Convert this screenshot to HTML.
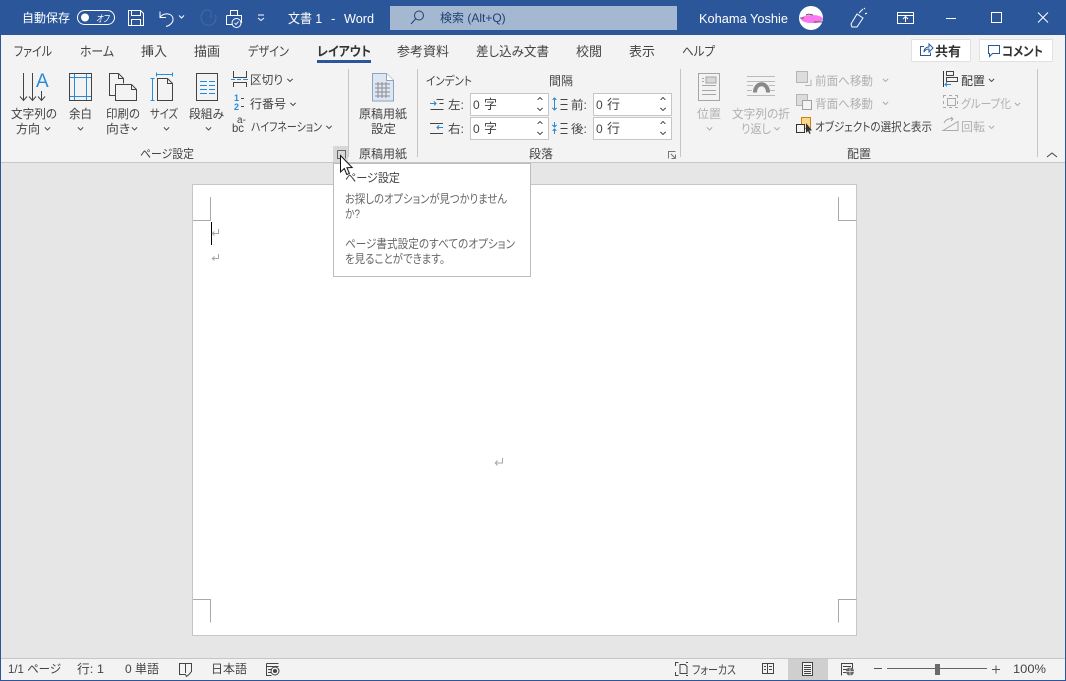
<!DOCTYPE html>
<html><head><meta charset="utf-8"><style>
html,body{margin:0;padding:0;width:1066px;height:681px;overflow:hidden;background:#f3f3f3}
svg{display:block;position:absolute;left:0;top:0}
text{font-family:"Liberation Sans","Noto Sans CJK JP",sans-serif;font-size:12px;fill:#444;font-feature-settings:"palt"}
.w text,text.w{fill:#fff}
.d text,text.d{fill:#b0b0b0}
.t text{font-size:13px}
.ic{fill:none;stroke:#444;stroke-width:1}
.bl{fill:none;stroke:#2b8ad6;stroke-width:1}
.wt{fill:none;stroke:#fff;stroke-width:1}
.ch{fill:none;stroke:#555;stroke-width:1}
.chd{fill:none;stroke:#b0b0b0;stroke-width:1}
.sep{stroke:#c6c6c6;stroke-width:1}
.tip text{fill:#666}
</style></head><body>
<svg width="1066" height="681" viewBox="0 0 1066 681" xmlns="http://www.w3.org/2000/svg" shape-rendering="crispEdges">
<!-- backgrounds -->
<rect width="1066" height="681" fill="#2b579a"/>
<rect x="1" y="35" width="1064" height="127" fill="#f3f3f3"/>
<rect x="1" y="162" width="1064" height="1" fill="#c6c6c6"/>
<rect x="1" y="163" width="1064" height="495" fill="#e6e6e6"/>
<rect x="1" y="658" width="1064" height="1" fill="#c6c6c6"/>
<rect x="1" y="659" width="1064" height="21" fill="#f3f3f3"/>

<!-- Title bar -->
<g class="w">
<text x="22" y="22" textLength="48" lengthAdjust="spacingAndGlyphs">自動保存</text>
<text x="288" y="23" textLength="34" lengthAdjust="spacingAndGlyphs" style="font-size:13px">文書 1</text>
<text x="331" y="23" style="font-size:13px">-</text>
<text x="344" y="23" textLength="30" lengthAdjust="spacingAndGlyphs" style="font-size:13px">Word</text>
<text x="699" y="23" textLength="89" lengthAdjust="spacingAndGlyphs" style="font-size:12.500px">Kohama Yoshie</text>
</g>
<g shape-rendering="geometricPrecision">
<rect x="77.500" y="10.500" width="37" height="14" rx="7" class="wt"/>
<circle cx="85" cy="17.500" r="4" fill="#fff"/>
<text x="96" y="22" class="w" textLength="13" lengthAdjust="spacingAndGlyphs" style="font-size:10px;font-style:italic">オフ</text>
<path d="M128.500 10.500h12l3 3v12h-15zM131.500 10.500v5h9v-5M131.500 25.500v-6h9v6" class="wt"/>
<path d="M160 11.500v6h6M160 17.500c3-5 12-5 13 1 .5 4-3 7-7 8" class="wt"/>
<path d="M179 15.500l2.500 2.500 2.500-2.500" class="wt"/>
<path d="M211 11c-1.500-1-4-1.500-6-.5-4 2-5 7-3 11 2.500 4 8 5 11.500 2 2.500-2 3-5.500 2-8.500" fill="none" stroke="#47699f" stroke-width="1"/>
<path d="M211 11v6h-.5" fill="none" stroke="#47699f"/>
<path d="M230.500 15.500v-5h7v5M226.500 15.500h15v7h-5M226.500 15.500v9h6" class="wt"/>
<circle cx="236.500" cy="23" r="4.500" fill="#2b579a" stroke="#fff"/>
<path d="M234.500 23l1.500 1.500 2.500-3" fill="none" stroke="#dfe6f1"/>
<path d="M258 15h6M258 18l3 2.500 3-2.500" class="wt"/>
</g>
<rect x="390" y="6" width="287" height="24" fill="#a5b8d1"/>
<g shape-rendering="geometricPrecision">
<circle cx="419" cy="15.500" r="4.500" fill="none" stroke="#22406f"/>
<path d="M415.500 19l-4.500 5" fill="none" stroke="#22406f"/>
<text x="440" y="22" style="fill:#1f3f73">検索 (Alt+Q)</text>
<circle cx="811" cy="18" r="12" fill="#fff"/>
<ellipse cx="812" cy="19" rx="11" ry="4" fill="#f878f0"/>
<path d="M800 18h4M806 15l3-1 4 1M814 22h9" stroke="#333" stroke-width=".8" fill="none"/>
<path d="M851 24l6-10 6 4-6 9-5 0zM859 13l4-4M865 14l2-1M864 9l1-1" class="wt"/>
<rect x="897.500" y="12.500" width="16" height="11" class="wt"/>
<path d="M897.500 15.500h16M905.500 22v-5M903 19l2.500-2.500 2.500 2.500" class="wt"/>
</g>
<path d="M946 18.500h10" stroke="#fff" fill="none"/>
<rect x="991.500" y="12.500" width="10" height="10" class="wt"/>
<g shape-rendering="geometricPrecision"><path d="M1038 12.500l10 10M1048 12.500l-10 10" class="wt"/></g>

<!-- Tabs -->
<g class="t">
<text x="14" y="56" textLength="38" lengthAdjust="spacingAndGlyphs">ファイル</text>
<text x="80" y="56" textLength="34" lengthAdjust="spacingAndGlyphs">ホーム</text>
<text x="141" y="56" textLength="26" lengthAdjust="spacingAndGlyphs">挿入</text>
<text x="194" y="56" textLength="26" lengthAdjust="spacingAndGlyphs">描画</text>
<text x="248" y="56" textLength="41" lengthAdjust="spacingAndGlyphs">デザイン</text>
<text x="317" y="56" textLength="54" lengthAdjust="spacingAndGlyphs" style="font-weight:bold;fill:#333">レイアウト</text>
<text x="397" y="56" textLength="52" lengthAdjust="spacingAndGlyphs">参考資料</text>
<text x="476" y="56" textLength="73" lengthAdjust="spacingAndGlyphs">差し込み文書</text>
<text x="576" y="56" textLength="26" lengthAdjust="spacingAndGlyphs">校閲</text>
<text x="629" y="56" textLength="26" lengthAdjust="spacingAndGlyphs">表示</text>
<text x="682" y="56" textLength="33" lengthAdjust="spacingAndGlyphs">ヘルプ</text>
</g>
<rect x="317" y="60" width="54" height="3" fill="#2b579a"/>

<!-- Share / comment -->
<rect x="911.500" y="39.500" width="59" height="22" fill="#fff" stroke="#e1e1e1" rx="1"/>
<rect x="979.500" y="39.500" width="73" height="22" fill="#fff" stroke="#e1e1e1" rx="1"/>
<g class="t">
<text x="935" y="56" textLength="26" lengthAdjust="spacingAndGlyphs" style="font-weight:bold;fill:#333">共有</text>
<text x="1002" y="56" textLength="41" lengthAdjust="spacingAndGlyphs" style="font-weight:bold;fill:#333">コメント</text>
</g>
<g shape-rendering="geometricPrecision">
<path d="M924 46.500h-3.500v9h10v-3" fill="none" stroke="#2b579a"/>
<path d="M924 52c0-3 2-5 5-5v-3l4 4-4 4v-3c-2 0-4 1-5 3z" fill="none" stroke="#2b579a"/>
<path d="M988.500 45.500h11v8h-7l-3 3v-3h-1z" fill="none" stroke="#2b579a"/>
</g>

<!-- Ribbon separators -->
<path d="M348.500 69v88M417.500 69v88M680.500 69v88M1037.500 69v88" class="sep"/>

<!-- 文字列の方向 -->
<g shape-rendering="geometricPrecision">
<path d="M23.500 73v27M20 96.500l3.500 4 3.500-4M32.500 73v27M29 96.500l3.500 4 3.500-4M41.500 91v9M38 96.500l3.500 4 3.500-4" class="ic"/>
<text x="36" y="87" style="font-size:19px;fill:#2b8ad6">A</text>
</g>
<text x="11" y="118" textLength="46" lengthAdjust="spacingAndGlyphs">文字列の</text>
<text x="16" y="133" textLength="24" lengthAdjust="spacingAndGlyphs">方向</text>
<text x="69" y="118" textLength="23" lengthAdjust="spacingAndGlyphs">余白</text>
<text x="106" y="118" textLength="34" lengthAdjust="spacingAndGlyphs">印刷の</text>
<text x="106" y="133" textLength="24" lengthAdjust="spacingAndGlyphs">向き</text>
<text x="150" y="118" textLength="28" lengthAdjust="spacingAndGlyphs">サイズ</text>
<text x="189" y="118" textLength="35" lengthAdjust="spacingAndGlyphs">段組み</text>
<path d="M45 127.500l2.500 2.500 2.500-2.500" class="ch"/>
<path d="M78 127.500l2.500 2.500 2.500-2.500" class="ch"/>
<path d="M132 127.500l2.500 2.500 2.500-2.500" class="ch"/>
<path d="M164 127.500l2.500 2.500 2.500-2.500" class="ch"/>
<path d="M206 127.500l2.500 2.500 2.500-2.500" class="ch"/>

<!-- 余白 -->
<rect x="69.500" y="73.500" width="22" height="27" class="ic"/>
<path d="M70 77.500h21M70 96.500h21M74.500 74v26M86.500 74v26" class="bl"/>
<!-- 印刷の向き -->
<g shape-rendering="geometricPrecision">
<path d="M115 95.500h-5.500v-22h9l5 5v5M118.500 73.500v5h5" class="ic"/>
<path d="M115.500 84.500h16l5 5v11h-21zM131.500 84.500v5h5" class="ic"/>
</g>
<!-- サイズ -->
<path d="M152.500 79v22M150.500 78.500h4M150.500 100.500h4M157 74.500h16M156.500 72.500v4M172.500 72.500v4" class="bl"/>
<g shape-rendering="geometricPrecision"><path d="M157.500 78.500h10l5 5v17h-15zM167.500 78.500v5h5" class="ic"/></g>
<!-- 段組み -->
<rect x="196.500" y="73.500" width="21" height="27" class="ic"/>
<path d="M200 81.500h7M209 81.500h6M200 85.500h7M209 85.500h6M200 89.500h7M209 89.500h6M200 93.500h7M209 93.500h6" class="bl" style="stroke:#1f8be0"/>

<!-- 区切り 行番号 ハイフネーション -->
<path d="M233.500 71v6.500h13v-6.500M233.500 87v-4.500h13v4.500" class="ic"/>
<path d="M231 79.500h4M237 79.500h4M243 79.500h5" class="bl"/>
<text x="250" y="84" textLength="33" lengthAdjust="spacingAndGlyphs">区切り</text>
<path d="M287.500 79l2.500 2.500 2.500-2.500" class="ch"/>
<text x="234" y="101" style="font-size:9px;fill:#2b8ad6;font-weight:bold">1</text>
<text x="234" y="110" style="font-size:9px;fill:#2b8ad6;font-weight:bold">2</text>
<path d="M241 98.500h3M241 106.500h3" class="ic"/>
<text x="250" y="108" textLength="36" lengthAdjust="spacingAndGlyphs">行番号</text>
<path d="M290.500 103l2.500 2.500 2.500-2.500" class="ch"/>
<text x="237" y="123" style="font-size:10px">a-</text>
<text x="232" y="132" textLength="12" lengthAdjust="spacingAndGlyphs" style="font-size:12px">bc</text>
<text x="251" y="131" textLength="71" lengthAdjust="spacingAndGlyphs">ハイフネーション</text>
<path d="M326.500 126l2.500 2.500 2.500-2.500" class="ch"/>

<text x="140" y="158" textLength="54" lengthAdjust="spacingAndGlyphs">ページ設定</text>
<rect x="333" y="146" width="15" height="16" fill="#d8d8d8"/>
<path d="M337.500 150.500h8v8" fill="none" stroke="#666"/>
<path d="M337.500 150.500v8h3" fill="none" stroke="#666"/>

<!-- 原稿用紙 -->
<g shape-rendering="geometricPrecision">
<path d="M372.500 73.500h14l7 7v20.500h-21z" fill="#dce6f4" stroke="#8ea3c0"/>
<path d="M386.500 73.500v7h7" fill="#fff" stroke="#8ea3c0"/>
</g>
<path d="M375 84h15M375 88h15M375 92h15M375 96h15M378 82v16M382 82v16M386 82v16" stroke="#8d8d8d" fill="none"/>
<text x="359" y="118" textLength="48" lengthAdjust="spacingAndGlyphs">原稿用紙</text>
<text x="371" y="133" textLength="25" lengthAdjust="spacingAndGlyphs">設定</text>
<text x="359" y="158" textLength="48" lengthAdjust="spacingAndGlyphs">原稿用紙</text>
<text x="529" y="158" textLength="24" lengthAdjust="spacingAndGlyphs">段落</text>
<text x="847" y="158" textLength="24" lengthAdjust="spacingAndGlyphs">配置</text>

<!-- 段落 -->
<text x="426" y="85" textLength="46" lengthAdjust="spacingAndGlyphs">インデント</text>
<text x="549" y="85" textLength="24" lengthAdjust="spacingAndGlyphs">間隔</text>
<rect x="470.500" y="93.500" width="78" height="22" fill="#fff" stroke="#c6c6c6"/>
<rect x="470.500" y="117.500" width="78" height="22" fill="#fff" stroke="#c6c6c6"/>
<rect x="593.500" y="93.500" width="78" height="22" fill="#fff" stroke="#c6c6c6"/>
<rect x="593.500" y="117.500" width="78" height="22" fill="#fff" stroke="#c6c6c6"/>
<text x="473" y="109">0</text><text x="484" y="109" style="font-size:13px">字</text>
<text x="473" y="133">0</text><text x="484" y="133" style="font-size:13px">字</text>
<text x="596" y="109">0</text><text x="607" y="109" style="font-size:13px">行</text>
<text x="596" y="133">0</text><text x="607" y="133" style="font-size:13px">行</text>
<text x="448" y="109" textLength="16" lengthAdjust="spacingAndGlyphs">左:</text>
<text x="448" y="133" textLength="16" lengthAdjust="spacingAndGlyphs">右:</text>
<text x="571" y="109" textLength="16" lengthAdjust="spacingAndGlyphs">前:</text>
<text x="571" y="133" textLength="16" lengthAdjust="spacingAndGlyphs">後:</text>
<path d="M537.500 100l2.500-2.500 2.500 2.500M537.500 108l2.500 2.500 2.500-2.500M537.500 124l2.500-2.500 2.500 2.500M537.500 132l2.500 2.500 2.500-2.500M660.500 100l2.500-2.500 2.500 2.500M660.500 108l2.500 2.500 2.500-2.500M660.500 124l2.500-2.500 2.500 2.500M660.500 132l2.500 2.500 2.500-2.500" class="ch"/>
<path d="M436.500 99.500h7M439.500 103.500h4M430.500 109.500h13M430 123.500h13M430 133.500h13M560.500 99.500h7M560.500 104.500h7M560.500 109.500h7M560.500 123.500h7M560.500 128.500h7M560.500 133.500h7" class="ic"/>
<path d="M430 103.500h6M434 101.500l2 2-2 2M443 127.500h-6M439 125.500l-2 2 2 2M554.500 98v12M552.500 100l2-2 2 2M552.500 108l2 2 2-2M554.500 122v5M552.500 125l2 2 2-2M554.500 129v5M552.500 131l2-2 2 2" class="bl"/>
<path d="M668.500 158.500v-7h7M675.500 158.500h-4M675.500 158.500v-4M671 154l4 4" fill="none" stroke="#777"/>

<!-- 配置 disabled -->
<rect x="698.500" y="73.500" width="21" height="27" fill="none" stroke="#a6a6a6"/>
<rect x="706" y="77" width="10" height="6" fill="#d8d8d8" stroke="#a6a6a6"/>
<path d="M702 78.500h2M702 81.500h2M702 85.500h14M702 90.500h14M702 94.500h14" stroke="#a6a6a6" fill="none"/>
<path d="M747 76.500h28M747 81.500h28M747 85.500h6M769 85.500h6M747 90.500h5M770 90.500h5M747 95.500h28" stroke="#bbb" fill="none"/>
<g shape-rendering="geometricPrecision"><path d="M755 92.500c0-11 13-11 13 0" fill="none" stroke="#888" stroke-width="4"/></g>
<g class="d">
<text x="697" y="118" textLength="24" lengthAdjust="spacingAndGlyphs">位置</text>
<text x="732" y="118" textLength="58" lengthAdjust="spacingAndGlyphs">文字列の折</text>
<text x="741" y="133" textLength="30" lengthAdjust="spacingAndGlyphs">り返し</text>
</g>
<path d="M707 127.500l2.500 2.500 2.500-2.500M774.500 127.500l2.500 2.500 2.500-2.500" class="chd"/>

<rect x="796.500" y="71.500" width="11" height="11" fill="#dcdcdc" stroke="#b5b5b5"/>
<path d="M805 85.500h6v-6" fill="none" stroke="#b5b5b5"/>
<rect x="796.500" y="94.500" width="11" height="11" fill="#dcdcdc" stroke="#b5b5b5"/>
<rect x="802.500" y="100.500" width="9" height="9" fill="#f3f3f3" stroke="#a0a0a0"/>
<g class="d">
<text x="815" y="85" textLength="58" lengthAdjust="spacingAndGlyphs">前面へ移動</text>
<text x="815" y="108" textLength="58" lengthAdjust="spacingAndGlyphs">背面へ移動</text>
<text x="961" y="108" textLength="50" lengthAdjust="spacingAndGlyphs">グループ化</text>
<text x="961" y="131" textLength="24" lengthAdjust="spacingAndGlyphs">回転</text>
</g>
<path d="M883 79l2.500 2.500 2.500-2.500M883 102l2.500 2.500 2.500-2.500M1015 103l2.500 2.500 2.500-2.500M989 126l2.500 2.500 2.500-2.500" class="chd"/>
<rect x="801.500" y="117.500" width="9" height="11" fill="#fbd78e" stroke="#d37d14"/>
<rect x="796.500" y="124.500" width="8" height="8" fill="#f3f3f3" stroke="#333"/>
<g shape-rendering="geometricPrecision"><path d="M806 123v10l2-2 1.500 3 1.200-.6-1.400-2.900h2.700z" fill="#333"/></g>
<text x="815" y="131" textLength="117" lengthAdjust="spacingAndGlyphs">オブジェクトの選択と表示</text>
<path d="M943.500 71v16" stroke="#333" fill="none"/>
<rect x="946.500" y="71.500" width="7" height="4" fill="none" stroke="#444"/>
<rect x="946.500" y="77.500" width="11" height="4" fill="none" stroke="#444"/>
<path d="M951 84.500h-6M947 82.500l-2 2 2 2" class="bl"/>
<text x="961" y="85" textLength="24" lengthAdjust="spacingAndGlyphs" style="fill:#333">配置</text>
<path d="M989 79l2.500 2.500 2.500-2.500" class="ch"/>
<path d="M943 95.500h15M943 107.500h15M943.500 95v13M957.500 95v13" fill="none" stroke="#aaa" stroke-dasharray="3 3"/>
<rect x="947.500" y="98.500" width="8" height="7" fill="none" stroke="#aaa"/>
<g shape-rendering="geometricPrecision"><path d="M943 130.500l15-9v9zM944 123c2-4 6-5 9-4M951 117l2 2-2 2" fill="none" stroke="#aaa"/></g>
<g shape-rendering="geometricPrecision"><path d="M1047 157l5-4 5 4" fill="none" stroke="#444"/></g>

<!-- Page -->
<rect x="192.500" y="184.500" width="664" height="451" fill="#fff" stroke="#c6c6c6"/>
<path d="M193 220.500h17.500v-23.500M838.500 197v23.500h18M193 599.500h17.500v23M838.500 622.500v-23h18" fill="none" stroke="#a9a9a9"/>
<rect x="211" y="222" width="1" height="23" fill="#000"/>
<g fill="none" stroke="#a5a5a5" shape-rendering="geometricPrecision">
<path d="M218.500 229v4.500h-6M214.500 231.500l-2.200 2 2.200 2"/>
<path d="M218.500 254v4.500h-6M214.500 256.500l-2.200 2 2.200 2"/>
<path d="M502.500 458v5h-7M497.500 460.500l-2.200 2.500 2.200 2.500"/>
</g>

<!-- Tooltip -->
<rect x="333.500" y="163.500" width="197" height="113" fill="#fff" stroke="#bcbcbc"/>
<text x="345" y="182" textLength="55" lengthAdjust="spacingAndGlyphs" style="fill:#444;-webkit-text-stroke:.2px #444">ページ設定</text>
<g class="tip">
<text x="345" y="203" textLength="162" lengthAdjust="spacingAndGlyphs">お探しのオプションが見つかりません</text>
<text x="345" y="218" textLength="15" lengthAdjust="spacingAndGlyphs">か?</text>
<text x="345" y="248" textLength="170" lengthAdjust="spacingAndGlyphs">ページ書式設定のすべてのオプション</text>
<text x="345" y="263" textLength="100" lengthAdjust="spacingAndGlyphs">を見ることができます。</text>
</g>
<!-- Cursor -->
<g shape-rendering="geometricPrecision">
<path d="M340.500 155.500v16.500l3.800-3.500 2.500 6 2.600-1.100-2.500-5.700 5.200-.2z" fill="#fff" stroke="#111"/>
</g>

<!-- Status bar -->
<text x="8" y="673" textLength="53" lengthAdjust="spacingAndGlyphs">1/1 ページ</text>
<text x="77" y="673" textLength="27" lengthAdjust="spacingAndGlyphs">行: 1</text>
<text x="125" y="673" textLength="34" lengthAdjust="spacingAndGlyphs">0 単語</text>
<g shape-rendering="geometricPrecision">
<path d="M179.500 663.500h12v8l-2.500 3-2.500 2-1-2h-6zM185.500 664v9" class="ic"/>
</g>
<text x="211" y="673" textLength="36" lengthAdjust="spacingAndGlyphs">日本語</text>
<path d="M266.500 663.500h12M266.500 663.500v12h5M266.500 666.500h12M268 669.500h4M268 672.500h3" class="ic"/>
<g shape-rendering="geometricPrecision"><circle cx="275" cy="671" r="4" fill="none" stroke="#444"/><circle cx="275" cy="671" r="2" fill="#444"/></g>

<path d="M675.500 666v-3.500h3M675.500 672v3.500h3M688 662.500h-2M688 675.500h-2M680 664.500h5l2 2v7h-7z" class="ic"/>
<text x="692" y="674" textLength="44" lengthAdjust="spacingAndGlyphs">フォーカス</text>
<path d="M762.500 663.500h5v10h-5zM767.500 663.500h6v10h-6zM764 666.500h2M764 669.500h2M769 666.500h3M769 669.500h3" class="ic"/>
<rect x="788" y="659" width="40" height="21" fill="#cfcfcf"/>
<rect x="802.500" y="662.500" width="10" height="13" fill="#f3f3f3" stroke="#444"/>
<path d="M804 665.500h7M804 667.500h7M804 669.500h7M804 671.500h7M804 673.500h7" stroke="#444" fill="none"/>
<path d="M841.500 675.500v-12h11v5M843 666.500h8M843 669.500h4M843 672.500h3" class="ic"/>
<g shape-rendering="geometricPrecision"><circle cx="850" cy="671.500" r="4" fill="#666"/><path d="M846 671.500h8M850 667.500v8" stroke="#eee" stroke-width=".7" fill="none"/></g>
<path d="M874 668.500h8" stroke="#555"/>
<rect x="887" y="668" width="100" height="1" fill="#666"/>
<rect x="935" y="664" width="5" height="11" fill="#6b6b6b"/>
<path d="M992 669.500h8M996 665.500v8" stroke="#555" fill="none"/>
<text x="1013" y="673" textLength="33" lengthAdjust="spacingAndGlyphs">100%</text>
</svg>
</body></html>
